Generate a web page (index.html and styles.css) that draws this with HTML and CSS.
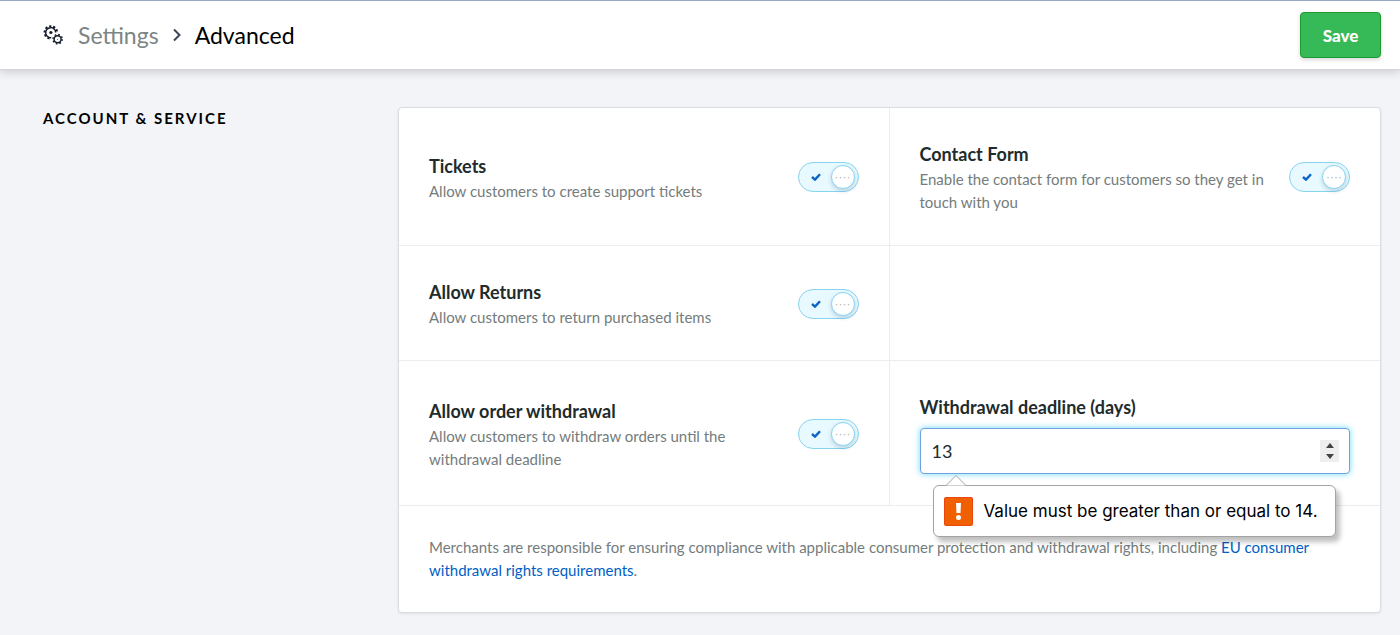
FILE: index.html
```html
<!DOCTYPE html>
<html lang="en">
<head>
  <meta charset="UTF-8">
  <meta name="viewport" content="width=device-width, initial-scale=1.0">
  <title>Settings - Advanced</title>
  <link rel="stylesheet" href="styles.css">
</head>
<body>

<header class="topbar">
  <nav class="breadcrumb" aria-label="Breadcrumb">
    <svg class="icon-gears" viewBox="0 0 20 20" width="20" height="20" fill="none" stroke="#141c2c" aria-hidden="true">
      <path d="M8.200 12.6A5 5 0 1 1 12.700 7.5" stroke-width="1.5"/>
      <path d="M6.5 13.500A6.2 6.2 0 1 1 14 6.600" stroke-width="2.200" stroke-dasharray="2.200 1.800"/>
      <circle cx="7.9" cy="7.5" r="1.6" fill="#141c2c" stroke="none"/>
      <circle cx="14.6" cy="14.2" r="3.500" stroke-width="1.500"/>
      <circle cx="14.6" cy="14.2" r="4.700" stroke-width="1.4" stroke-dasharray="1.7 1.99"/>
      <circle cx="14.6" cy="14.2" r="0.5" fill="#141c2c" stroke="none"/>
    </svg>
    <a href="#">Settings</a>
    <svg class="icon-chevron" viewBox="0 0 8 14" width="8" height="14" fill="none" stroke="#3c4658" stroke-width="2" aria-hidden="true">
      <path d="M1 1.500l5.500 5.500-5.500 5.500"/>
    </svg>
    <h1>Advanced</h1>
  </nav>
  <button class="btn-save" type="submit" form="settingsForm">Save</button>
</header>

<main class="content">
  <h2>Account &amp; Service</h2>

  <form class="panel" id="settingsForm" novalidate>
    <div class="cell">
      <div class="text">
        <label for="tickets">Tickets</label>
        <p>Allow customers to create support tickets</p>
      </div>
      <div class="switch">
        <input type="checkbox" id="tickets" checked>
        <svg viewBox="0 0 10 8" width="10" height="8" aria-hidden="true"><path d="M1 4l3 2.600L9 1.200"/></svg>
      </div>
    </div>

    <div class="cell">
      <div class="text">
        <label for="contact">Contact Form</label>
        <p>Enable the contact form for customers so they get in touch with you</p>
      </div>
      <div class="switch">
        <input type="checkbox" id="contact" checked>
        <svg viewBox="0 0 10 8" width="10" height="8" aria-hidden="true"><path d="M1 4l3 2.600L9 1.200"/></svg>
      </div>
    </div>

    <div class="cell">
      <div class="text">
        <label for="returns">Allow Returns</label>
        <p>Allow customers to return purchased items</p>
      </div>
      <div class="switch">
        <input type="checkbox" id="returns" checked>
        <svg viewBox="0 0 10 8" width="10" height="8" aria-hidden="true"><path d="M1 4l3 2.600L9 1.200"/></svg>
      </div>
    </div>

    <div class="cell"></div>

    <div class="cell">
      <div class="text">
        <label for="withdrawal">Allow order withdrawal</label>
        <p>Allow customers to withdraw orders until the withdrawal deadline</p>
      </div>
      <div class="switch">
        <input type="checkbox" id="withdrawal" checked>
        <svg viewBox="0 0 10 8" width="10" height="8" aria-hidden="true"><path d="M1 4l3 2.600L9 1.200"/></svg>
      </div>
    </div>

    <div class="cell">
      <div class="field">
        <label for="deadline">Withdrawal deadline (days)</label>
        <div class="number">
          <input type="number" id="deadline" min="14" value="13" aria-describedby="deadlineError">
          <div class="spinner">
            <button type="button" aria-label="Increase" onclick="deadline.stepUp()">
              <svg viewBox="0 0 8 5" width="8" height="5"><path d="M0 5l4-5 4 5z"/></svg>
            </button>
            <button type="button" aria-label="Decrease" onclick="deadline.stepDown()">
              <svg viewBox="0 0 8 5" width="8" height="5"><path d="M0 0l4 5 4-5z"/></svg>
            </button>
          </div>
          <div class="tooltip" id="deadlineError" role="alert">
            <svg class="tooltip-arrow" viewBox="0 0 20 11" width="20" height="11" aria-hidden="true">
              <path d="M0 10.500L10 .5l10 10" fill="#fff" stroke="#a3a3a3"/>
            </svg>
            <svg viewBox="0 0 29 29" width="29" height="29" aria-hidden="true">
              <rect width="29" height="29" rx="2" fill="#e8480c"/>
              <rect x="1" y="1" width="27" height="27" rx="1" fill="#f06000"/>
              <path d="M12 6h5l-.5 10h-4z" fill="#fff"/>
              <circle cx="14.500" cy="20.500" r="2.500" fill="#fff"/>
            </svg>
            <span>Value must be greater than or equal to 14.</span>
          </div>
        </div>
      </div>
    </div>

    <p class="note">Merchants are responsible for ensuring compliance with applicable consumer protection and withdrawal rights, including <a href="#">EU consumer withdrawal rights requirements</a>.</p>
  </form>
</main>

</body>
</html>
```
FILE: styles.css
```css
*,
*::after {
  box-sizing: border-box;
}
body {
  margin: 0;
  font-family: Lato, sans-serif;
  font-size: 15px;
  line-height: 23px;
  color: #212b2b;
  background-color: #f3f4f8;
}
h1, h2, p {
  margin: 0;
}
.topbar {
  display: flex;
  align-items: center;
  justify-content: space-between;
  height: 69px;
  padding: 0 19px 0 43px;
  background-color: #fff;
  border-top: 1px solid #98a6c8;
  box-shadow: 0 1px 1px #d5d6d9, 0 2px 10px rgba(0, 0, 0, 0.2);
}
.breadcrumb {
  display: flex;
  align-items: center;
  font-size: 23px;
  line-height: 30px;
}
.breadcrumb a {
  margin-left: 15px;
  color: #7c8484;
  text-decoration: none;
}
.breadcrumb h1 {
  font-size: 23px;
  font-weight: normal;
  color: #000;
}
.icon-chevron {
  margin: 0 14px;
}
.btn-save {
  height: 46px;
  width: 81px;
  font-family: inherit;
  font-size: 17px;
  font-weight: 900;
  color: #fff;
  background-color: #36b957;
  border: 1px solid #1f9a32;
  border-radius: 4px;
  box-shadow: 0 2px 4px rgba(0, 0, 0, 0.15);
  cursor: pointer;
}
.content {
  display: grid;
  grid-template-columns: 355px 1fr;
  padding: 38px 19px 22px 43px;
}
.content h2 {
  font-size: 15px;
  line-height: 23px;
  font-weight: bold;
  letter-spacing: 2px;
  text-transform: uppercase;
  color: #000;
}
.panel {
  display: grid;
  grid-template-columns: 1fr 1fr;
  background-color: #fff;
  border: 1px solid #d9dce0;
  border-radius: 4px;
  box-shadow: 0 1px 3px rgba(0, 0, 0, 0.08);
}
.cell {
  display: flex;
  align-items: center;
  justify-content: space-between;
  gap: 24px;
  padding: 32px 30px 31px;
  border-bottom: 1px solid #ececee;
}
.cell:nth-child(odd) {
  border-right: 1px solid #ececee;
}
.cell label {
  display: block;
  font-size: 18px;
  line-height: 28px;
  font-weight: bold;
}
.cell p,
.note {
  color: #747c7c;
}
.switch {
  position: relative;
  flex: none;
  width: 61px;
  height: 30px;
}
.switch input {
  display: block;
  appearance: none;
  width: 100%;
  height: 100%;
  margin: 0;
  background-color: #e8f9ff;
  border: 1px solid #86d4f0;
  border-radius: 15px;
  cursor: pointer;
}
.switch input::after {
  content: "····";
  position: absolute;
  top: 3px;
  right: 4px;
  width: 24px;
  height: 24px;
  font-size: 12px;
  line-height: 22px;
  text-align: center;
  color: #b5b5b5;
  background-color: #fff;
  border: 1px solid #86d4f0;
  border-radius: 50%;
  box-shadow: 0 2px 4px rgba(0, 60, 100, 0.2);
}
.switch input:not(:checked)::after {
  right: 33px;
}
.switch svg {
  position: absolute;
  top: 11px;
  left: 13px;
  fill: none;
  stroke: #0c64c4;
  stroke-width: 2.4;
  pointer-events: none;
}
.field {
  flex: 1;
}
.number {
  position: relative;
  display: flex;
  align-items: center;
  height: 46px;
  margin-top: 7px;
  padding: 0 10px 0 11px;
  background-color: #fff;
  border: 1px solid #6fa3e0;
  border-radius: 4px;
  box-shadow: 0 0 6px #6cd8ff;
}
.number input {
  flex: 1;
  min-width: 0;
  padding: 0;
  font-family: inherit;
  font-size: 18px;
  color: #212b2b;
  background: none;
  border: none;
  outline: none;
  appearance: textfield;
}
.spinner {
  display: flex;
  flex-direction: column;
  width: 19px;
  height: 22px;
  background-color: #efefef;
}
.spinner button {
  display: flex;
  flex: 1;
  align-items: center;
  justify-content: center;
  padding: 0;
  background: none;
  border: none;
}
.spinner svg {
  fill: #444;
}
.tooltip {
  position: absolute;
  top: 56px;
  left: 12px;
  display: flex;
  align-items: center;
  gap: 11px;
  width: 403px;
  height: 52px;
  padding: 0 10px;
  font-family: Inter, sans-serif;
  font-size: 17px;
  white-space: nowrap;
  color: #000;
  background-color: #fff;
  border: 1px solid #a3a3a3;
  border-radius: 6px;
  box-shadow: 4px 5px 5px rgba(0, 0, 0, 0.25);
}
.tooltip-arrow {
  position: absolute;
  top: -11px;
  left: 12px;
}
.note {
  grid-column: 1 / -1;
  padding: 30px;
}
.note a {
  color: #0060c4;
  text-decoration: none;
}
```
